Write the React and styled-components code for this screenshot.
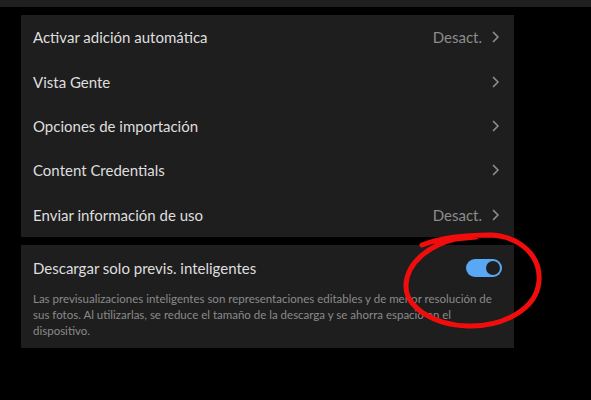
import styled, { createGlobalStyle } from "styled-components";

const GlobalStyle = createGlobalStyle`
  html, body {
    margin: 0;
    padding: 0;
    background: #000;
  }
  body {
    font-family: Lato, "Open Sans", sans-serif;
    -webkit-font-smoothing: antialiased;
  }
`;

const Page = styled.div`
  position: relative;
  width: 591px;
  height: 400px;
  overflow: hidden;
  background: #000;
`;

const TopBand = styled.div`
  height: 7px;
  background: #1f1f1f;
`;

const Column = styled.div`
  display: flex;
  flex-direction: column;
  gap: 8px;
  width: 493px;
  margin: 8px 0 0 21px;
`;

const Panel = styled.div`
  background: #1e1e1e;
  display: flex;
  flex-direction: column;
`;

const Row = styled.div`
  height: 44.4px;
  display: flex;
  align-items: center;
  justify-content: space-between;
  padding: 0 14px 0 12px;
`;

const Label = styled.span`
  color: #dedede;
  font-size: 15px;
`;

const Trail = styled.div`
  display: flex;
  align-items: center;
  gap: 10px;
`;

const Value = styled.span`
  color: #8c8c8c;
  font-size: 15px;
`;

const ToggleHeader = styled.div`
  display: flex;
  align-items: center;
  justify-content: space-between;
  padding: 13px 12px 0 12px;
  height: 20px;
`;

const Desc = styled.p`
  margin: 13px 0 0 12px;
  width: 468px;
  color: #8a8a8a;
  font-size: 11.5px;
  line-height: 16px;
  padding-bottom: 9px;
`;

const Toggle = styled.div`
  width: 36px;
  height: 18px;
  border-radius: 9px;
  background: #59a8f5;
  display: flex;
  align-items: center;
  justify-content: ${(p) => (p.$on ? "flex-end" : "flex-start")};
  padding: 0 2px;
  box-sizing: border-box;
`;

const Knob = styled.div`
  width: 14px;
  height: 14px;
  border-radius: 50%;
  background: #1e1e1e;
`;

const Annotation = styled.svg`
  position: absolute;
  top: 0;
  left: 0;
  pointer-events: none;
`;

const Chevron = () => (
  <svg width="8" height="12" viewBox="0 0 8 12">
    <path d="M1.5 1.5 L6 6 L1.5 10.5" fill="none" stroke="#8c8c8c" strokeWidth="1.7" strokeLinecap="round" strokeLinejoin="round" />
  </svg>
);

const rows = [
  { label: "Activar adición automática", value: "Desact." },
  { label: "Vista Gente" },
  { label: "Opciones de importación" },
  { label: "Content Credentials" },
  { label: "Enviar información de uso", value: "Desact." },
];

export default function App() {
  return (
    <Page>
      <GlobalStyle />
      <TopBand />
      <Column>
        <Panel>
          {rows.map((r) => (
            <Row key={r.label}>
              <Label>{r.label}</Label>
              <Trail>
                {r.value && <Value>{r.value}</Value>}
                <Chevron />
              </Trail>
            </Row>
          ))}
        </Panel>
        <Panel>
          <ToggleHeader>
            <Label>Descargar solo previs. inteligentes</Label>
            <Toggle $on>
              <Knob />
            </Toggle>
          </ToggleHeader>
          <Desc>
            Las previsualizaciones inteligentes son representaciones editables y de menor resolución de
            sus fotos. Al utilizarlas, se reduce el tamaño de la descarga y se ahorra espacio en el
            dispositivo.
          </Desc>
        </Panel>
      </Column>
      <Annotation width="591" height="400" viewBox="0 0 591 400">
        <path
          d="M422 245 C440 238 465 235 490 235 C520 236 541 256 539 281 C537 309 503 327 468 326 C432 325 405 306 406 285 C407 262 430 245 455 239 L476 237"
          fill="none"
          stroke="#f20d0d"
          strokeWidth="5"
          strokeLinecap="round"
        />
      </Annotation>
    </Page>
  );
}
